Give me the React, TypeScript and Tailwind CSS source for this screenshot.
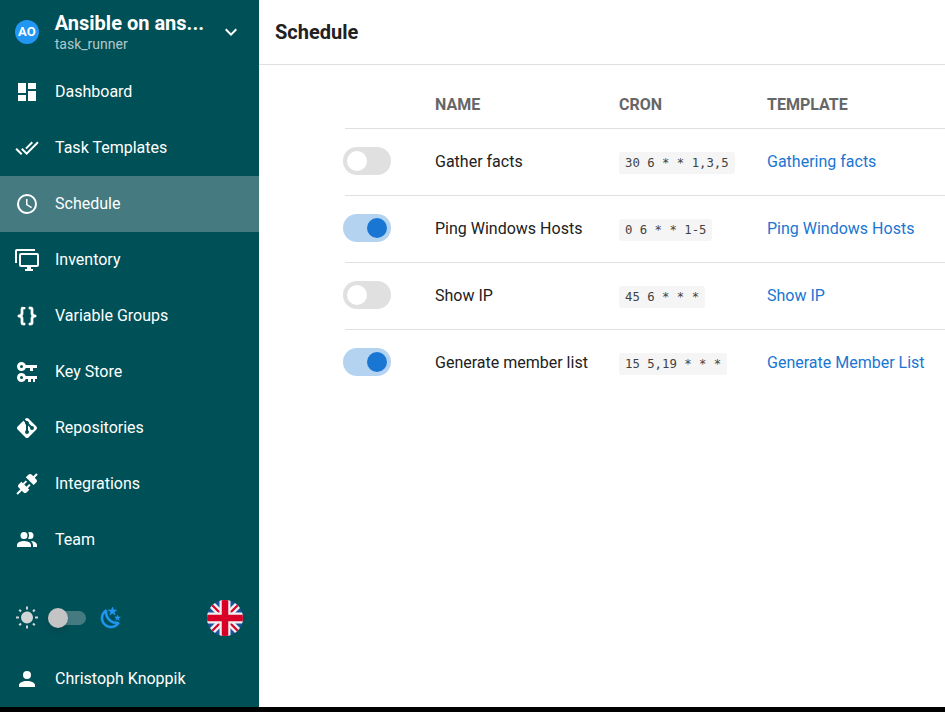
import React from 'react';

const mdi = {
  dashboard: 'M13,3V9H21V3M13,21H21V11H13M3,21H11V15H3M3,13H11V3H3V13Z',
  checkAll: 'M0.41,13.41L6,19L7.41,17.58L1.83,12M22.24,5.58L11.66,16.17L7.5,12L6.07,13.41L11.66,19L23.66,7M18,7L16.59,5.58L10.24,11.93L11.66,13.34L18,7Z',
  clock: 'M12,20A8,8 0 0,0 20,12A8,8 0 0,0 12,4A8,8 0 0,0 4,12A8,8 0 0,0 12,20M12,2A10,10 0 0,1 22,12A10,10 0 0,1 12,22C6.47,22 2,17.5 2,12A10,10 0 0,1 12,2M12.5,7V12.25L17,14.92L16.25,16.15L11,13V7H12.5Z',
  monitors: 'M22,17V7H6V17H22M22,5A2,2 0 0,1 24,7V17C24,18.11 23.1,19 22,19H16V21H18V23H10V21H12V19H6C4.89,19 4,18.11 4,17V7A2,2 0 0,1 6,5H22M2,3V15H0V3A2,2 0 0,1 2,1H20V3H2Z',
  braces: 'M8,3A2,2 0 0,0 6,5V9A2,2 0 0,1 4,11H3V13H4A2,2 0 0,1 6,15V19A2,2 0 0,0 8,21H10V19H8V14A2,2 0 0,0 6,12A2,2 0 0,0 8,10V5H10V3M16,3A2,2 0 0,1 18,5V9A2,2 0 0,0 20,11H21V13H20A2,2 0 0,0 18,15V19A2,2 0 0,1 16,21H14V19H16V14A2,2 0 0,1 18,12A2,2 0 0,1 16,10V5H14V3H16Z',
  keys: 'M6.5,2C8.46,2 10.13,3.25 10.74,5H22V8H18V11H15V8H10.74C10.13,9.75 8.46,11 6.5,11C4,11 2,9 2,6.5C2,4 4,2 6.5,2M6.5,5A1.5,1.5 0 0,0 5,6.5A1.5,1.5 0 0,0 6.5,8A1.5,1.5 0 0,0 8,6.5A1.5,1.5 0 0,0 6.5,5M6.5,13C8.46,13 10.13,14.25 10.74,16H22V19H20V22H18V19H16V22H13V19H10.74C10.13,20.75 8.46,22 6.5,22C4,22 2,20 2,17.5C2,15 4,13 6.5,13M6.5,16A1.5,1.5 0 0,0 5,17.5A1.5,1.5 0 0,0 6.5,19A1.5,1.5 0 0,0 8,17.5A1.5,1.5 0 0,0 6.5,16Z',
  git: 'M2.6,10.59L8.38,4.8L10.07,6.5C9.83,7.35 10.22,8.28 11,8.73V14.27C10.4,14.61 10,15.26 10,16A2,2 0 0,0 12,18A2,2 0 0,0 14,16C14,15.26 13.6,14.61 13,14.27V9.41L15.07,11.5C15,11.65 15,11.82 15,12A2,2 0 0,0 17,14A2,2 0 0,0 19,12A2,2 0 0,0 17,10C16.82,10 16.65,10 16.5,10.07L13.93,7.5C14.19,6.57 13.71,5.55 12.78,5.16C12.35,5 11.9,4.96 11.5,5.07L9.8,3.38L10.59,2.6C11.37,1.81 12.63,1.81 13.41,2.6L21.4,10.59C22.19,11.37 22.19,12.63 21.4,13.41L13.41,21.4C12.63,22.19 11.37,22.19 10.59,21.4L2.6,13.41C1.81,12.63 1.81,11.37 2.6,10.59Z',
  connection: 'M21.4 7.5C22.2 8.3 22.2 9.6 21.4 10.3L18.6 13.1L10.8 5.3L13.6 2.5C14.4 1.7 15.7 1.7 16.5 2.5L18.3 4.3L21.3 1.3L22.7 2.7L19.7 5.7L21.4 7.5M15.6 13.3L14.2 11.9L11.4 14.7L9.3 12.6L12.1 9.8L10.7 8.4L7.9 11.2L6.4 9.8L3.6 12.6C2.8 13.4 2.8 14.7 3.6 15.5L5.4 17.3L1.4 21.3L2.8 22.7L6.8 18.7L8.6 20.5C9.4 21.3 10.7 21.3 11.5 20.5L14.3 17.7L12.9 16.3L15.6 13.3Z',
  team: 'M16 17V19H2V17S2 13 9 13 16 17 16 17M12.5 7.5A3.5 3.5 0 1 0 9 11A3.5 3.5 0 0 0 12.5 7.5M15.94 13A5.32 5.32 0 0 1 18 17V19H22V17S22 13.37 15.94 13M15 4A3.39 3.39 0 0 0 13.07 4.59A5 5 0 0 1 13.07 10.41A3.39 3.39 0 0 0 15 11A3.5 3.5 0 0 0 15 4Z',
  account: 'M12,4A4,4 0 0,1 16,8A4,4 0 0,1 12,12A4,4 0 0,1 8,8A4,4 0 0,1 12,4M12,14C16.42,14 20,15.79 20,18V20H4V18C4,15.79 7.58,14 12,14Z',
  chevron: 'M7.41,8.58L12,13.17L16.59,8.58L18,10L12,16L6,10L7.41,8.58Z',
  sun: 'M3.55 18.54L4.96 19.95L6.76 18.16L5.34 16.74M11 22.45H13V19.5H11M12 5.5A6 6 0 0 0 6 11.5A6 6 0 0 0 12 17.5A6 6 0 0 0 18 11.5C18 8.18 15.31 5.5 12 5.5M20 12.5H23V10.5H20M17.24 18.16L19.04 19.95L20.45 18.54L18.66 16.74M20.45 4.46L19.04 3.05L17.24 4.84L18.66 6.26M13 .55H11V3.5H13M4 10.5H1V12.5H4M6.76 4.84L4.96 3.05L3.55 4.46L5.34 6.26L6.76 4.84Z',
  night: 'M17.75,4.09L15.22,6.03L16.13,9.09L13.5,7.28L10.87,9.09L11.78,6.03L9.25,4.09L12.44,4L13.5,1L14.56,4L17.75,4.09M21.25,11L19.61,12.25L20.2,14.23L18.5,13.06L16.8,14.23L17.39,12.25L15.75,11L17.81,10.95L18.5,9L19.19,10.95L21.25,11M18.97,15.95C19.8,15.87 20.69,17.05 20.16,17.8C19.84,18.25 19.5,18.67 19.08,19.07C15.17,23 8.84,23 4.94,19.07C1.03,15.17 1.03,8.83 4.94,4.93C5.34,4.53 5.76,4.17 6.21,3.85C6.96,3.32 8.14,4.21 8.06,5.04C7.79,7.9 8.75,10.87 10.95,13.06C13.14,15.26 16.1,16.22 18.97,15.95M17.33,17.97C14.5,17.81 11.7,16.64 9.53,14.5C7.36,12.31 6.2,9.5 6.04,6.68C3.23,9.82 3.34,14.64 6.35,17.66C9.37,20.67 14.19,20.78 17.33,17.97Z',
};

const Icon: React.FC<{ path: string; className?: string }> = ({ path, className = 'w-6 h-6 text-white' }) => (
  <svg viewBox="0 0 24 24" className={`${className} shrink-0`} fill="currentColor">
    <path d={path} />
  </svg>
);

const navItems = [
  { label: 'Dashboard', icon: mdi.dashboard },
  { label: 'Task Templates', icon: mdi.checkAll },
  { label: 'Schedule', icon: mdi.clock, active: true },
  { label: 'Inventory', icon: mdi.monitors },
  { label: 'Variable Groups', icon: mdi.braces, iconClass: 'w-6 h-6 text-white stroke-current stroke-[0.7]' },
  { label: 'Key Store', icon: mdi.keys },
  { label: 'Repositories', icon: mdi.git },
  { label: 'Integrations', icon: mdi.connection },
  { label: 'Team', icon: mdi.team },
];

const schedules = [
  { name: 'Gather facts', cron: '30 6 * * 1,3,5', template: 'Gathering facts', on: false },
  { name: 'Ping Windows Hosts', cron: '0 6 * * 1-5', template: 'Ping Windows Hosts', on: true },
  { name: 'Show IP', cron: '45 6 * * *', template: 'Show IP', on: false },
  { name: 'Generate member list', cron: '15 5,19 * * *', template: 'Generate Member List', on: true },
];

const UkFlag = () => (
  <svg viewBox="0 0 36 36" className="w-9 h-9 shrink-0">
    <defs>
      <clipPath id="flag-circle">
        <circle cx="18" cy="18" r="18" />
      </clipPath>
    </defs>
    <g clipPath="url(#flag-circle)">
      <rect width="36" height="36" fill="#1e50a0" />
      <path d="M0 0L36 36M36 0L0 36" stroke="#f0f0f0" strokeWidth="7" />
      <path d="M0 0L36 36M36 0L0 36" stroke="#d80027" strokeWidth="2.2" />
      <path d="M18 0V36M0 18H36" stroke="#f0f0f0" strokeWidth="11" />
      <path d="M18 0V36M0 18H36" stroke="#d80027" strokeWidth="6.5" />
    </g>
  </svg>
);

const Toggle: React.FC<{ on: boolean }> = ({ on }) => (
  <div
    className={`w-12 h-7 -ml-[2px] -mt-[2px] rounded-full flex items-center px-1 ${
      on ? 'bg-[#b3d3f1] justify-end' : 'bg-[#e0e0e0] justify-start'
    }`}
  >
    <div className={`w-5 h-5 rounded-full ${on ? 'bg-[#1976d2]' : 'bg-white'}`} />
  </div>
);

export default function App() {
  return (
    <div className="w-[945px] h-[712px] bg-black overflow-hidden font-['Roboto',sans-serif]">
      <div className="h-[707px] flex">
        <aside className="w-[259px] shrink-0 bg-[#005057] text-white flex flex-col">
          <div className="h-16 flex items-center pl-[15px] pr-4 shrink-0">
            <div className="w-6 h-6 rounded-full bg-[#2196f3] flex items-center justify-center text-[13px] font-bold">AO</div>
            <div className="ml-4 w-[148px] min-w-0 -mt-[2px]">
              <div className="text-[20px] leading-[26px] font-bold whitespace-nowrap">Ansible on ans...</div>
              <div className="text-[14px] leading-[16px] text-white/70">task_runner</div>
            </div>
            <Icon path={mdi.chevron} className="w-6 h-6 text-white ml-[18px]" />
          </div>

          {navItems.map((item) => (
            <div
              key={item.label}
              className={`h-14 flex items-center pl-[15px] gap-4 shrink-0 ${item.active ? 'bg-[#447a80]' : ''}`}
            >
              <Icon path={item.icon} className={item.iconClass} />
              <span className="text-[16px] font-normal">{item.label}</span>
            </div>
          ))}

          <div className="flex-1 flex items-center pl-[15px] pr-[16px] pt-4">
            <Icon path={mdi.sun} className="w-6 h-6 text-[#d0d6d6]" />
            <div className="relative w-[38px] h-[14px] ml-[9px] rounded-full bg-[#447a80]">
              <div className="absolute left-0 -top-[3px] w-5 h-5 rounded-full bg-[#c4c4c4] shadow-md" />
            </div>
            <Icon path={mdi.night} className="w-6 h-6 text-[#2196f3] stroke-current stroke-[0.6] ml-[13px]" />
            <div className="ml-auto">
              <UkFlag />
            </div>
          </div>

          <div className="h-14 flex items-center pl-[15px] gap-4 shrink-0">
            <Icon path={mdi.account} />
            <span className="text-[16px] font-normal">Christoph Knoppik</span>
          </div>
        </aside>

        <main className="flex-1 min-w-0 bg-white overflow-hidden">
          <div className="h-[65px] border-b border-[#e0e0e0] flex items-center px-4">
            <h1 className="text-[20px] font-bold text-[#212121]">Schedule</h1>
          </div>
          <div className="pt-[15px] pl-[86px]">
            <table className="w-[700px] table-fixed border-collapse text-left">
              <colgroup>
                <col className="w-[74px]" />
                <col className="w-[184px]" />
                <col className="w-[148px]" />
                <col />
              </colgroup>
              <thead>
                <tr className="h-12 border-b border-[#e0e0e0] text-[16px] text-[#666666]">
                  <th />
                  <th className="px-4 pt-[2px] font-bold">NAME</th>
                  <th className="px-4 pt-[2px] font-bold">CRON</th>
                  <th className="px-4 pt-[2px] font-bold">TEMPLATE</th>
                </tr>
              </thead>
              <tbody>
                {schedules.map((row, i) => (
                  <tr key={row.name} className={`h-[67px] ${i < schedules.length - 1 ? 'border-b border-[#e0e0e0]' : ''}`}>
                    <td className="align-middle">
                      <Toggle on={row.on} />
                    </td>
                    <td className="px-4 text-[16px] text-[#212121] whitespace-nowrap">{row.name}</td>
                    <td className="px-4">
                      <code className="inline-block h-[22px] leading-[22px] px-[6px] rounded-[3px] bg-[#f5f5f5] text-[#424242] text-[12.3px] font-['DejaVu_Sans_Mono',monospace] whitespace-pre">
                        {row.cron}
                      </code>
                    </td>
                    <td className="px-4 text-[16px] text-[#1976d2] whitespace-nowrap">{row.template}</td>
                  </tr>
                ))}
              </tbody>
            </table>
          </div>
        </main>
      </div>
    </div>
  );
}
